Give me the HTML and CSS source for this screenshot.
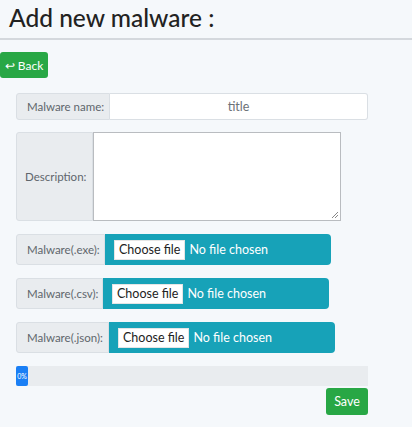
FILE: index.html
```html
<!DOCTYPE html>
<html>
<head>
<meta charset="utf-8">
<link rel="stylesheet" href="styles.css">
</head>
<body>
<header class="top">
  <h1 class="title">Add new malware :</h1>
</header>
<main class="page">
  <div class="back-row"><a class="btn btn-green back">↩ Back</a></div>
  <form class="form">
    <div class="group name-group">
      <span class="label">Malware name:</span>
      <div class="input">title</div>
    </div>
    <div class="group desc-group">
      <span class="label">Description:</span>
      <div class="textarea">
        <svg class="grip" width="8" height="8" viewBox="0 0 8 8"><path d="M7 1L1 7M7 4L4 7" stroke="#888" stroke-width="1"/></svg>
      </div>
    </div>
    <div class="group file-group exe">
      <span class="label">Malware(.exe):</span>
      <div class="file"><span class="choose">Choose file</span><span class="nofile">No file chosen</span></div>
    </div>
    <div class="group file-group csv">
      <span class="label">Malware(.csv):</span>
      <div class="file"><span class="choose">Choose file</span><span class="nofile">No file chosen</span></div>
    </div>
    <div class="group file-group json">
      <span class="label">Malware(.json):</span>
      <div class="file"><span class="choose">Choose file</span><span class="nofile">No file chosen</span></div>
    </div>
    <div class="progress"><div class="bar">0%</div></div>
    <div class="save-row"><a class="btn btn-green save">Save</a></div>
  </form>
</main>
</body>
</html>
```
FILE: styles.css
```css
* { box-sizing: border-box; }
html, body { margin: 0; padding: 0; }
body {
  background: #f5f8fb;
  font-family: Lato, "Noto Sans", sans-serif;
  color: #212529;
  width: 412px;
  height: 427px;
  overflow: hidden;
}
.top {
  height: 40px;
  border-bottom: 2px solid #d4d8dd;
  padding: 0 0 0 9px;
}
.title {
  margin: 0;
  font-size: 24.5px;
  font-weight: 500;
  line-height: 35px;
  color: #222;
  letter-spacing: 0;
}
.page { padding-top: 12px; }
.back-row { display: flex; }
.btn {
  display: inline-flex;
  align-items: center;
  justify-content: center;
  color: #fff;
  border-radius: 3px;
  font-size: 12px;
  text-decoration: none;
  white-space: nowrap;
}
.btn-green { background: #28a745; }
.back { width: 48px; height: 26px; }
.form {
  margin: 15px 0 0 16px;
  width: 352px;
  display: flex;
  flex-direction: column;
  gap: 13px;
}
.group {
  display: flex;
  align-items: stretch;
}
.label {
  display: flex;
  align-items: center;
  background: #e9ecef;
  border: 1px solid #dadfe4;
  border-radius: 3px 0 0 3px;
  color: #60666c;
  font-size: 11.5px;
  padding: 0 0 0 10px;
  white-space: nowrap;
}
.name-group { height: 27px; margin-bottom: -1px; }
.name-group .label { width: 94px; }
.input {
  flex: 1;
  background: #fff;
  border: 1px solid #dadfe4;
  border-left: none;
  border-radius: 0 3px 3px 0;
  display: flex;
  align-items: center;
  justify-content: center;
  color: #6c7177;
  font-size: 12.5px;
}
.desc-group { height: 89px; width: 325px; }
.desc-group .label { width: 77px; padding-left: 8px; }
.textarea {
  flex: 1;
  background: #fff;
  border: 1px solid #b9bcc0;
  position: relative;
}
.grip { position: absolute; right: 1px; bottom: 1px; }
.file-group { height: 31px; }
.exe .label { width: 89px; }
.csv .label { width: 87px; }
.json .label { width: 93px; }
.file {
  width: 226px;
  background: #17a2b8;
  border-radius: 0 4px 4px 0;
  display: flex;
  align-items: center;
  padding-left: 9px;
  gap: 4px;
  font-size: 12.5px;
}
.choose {
  background: #fff;
  color: #222;
  height: 20px;
  display: flex;
  align-items: center;
  padding: 0 4px;
  border: 1px solid #e5e5e5;
}
.nofile { color: #fff; }
.progress {
  height: 20px;
  background: #e9ecef;
  display: flex;
}
.bar {
  width: 12px;
  background: #1a7ff5;
  border-radius: 2px;
  color: #fff;
  font-size: 7px;
  display: flex;
  align-items: center;
  justify-content: center;
  overflow: hidden;
}
.save-row {
  display: flex;
  justify-content: flex-end;
  margin-top: -11px;
}
.save { width: 42px; height: 27px; font-size: 12.5px; }
```
